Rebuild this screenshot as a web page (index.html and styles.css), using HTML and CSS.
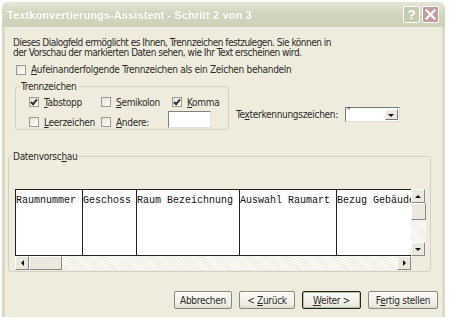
FILE: index.html
```html
<!DOCTYPE html>
<html>
<head>
    <title>Textkonvertierungs-Assistent</title>
    <link rel="stylesheet" href="styles.css">
</head>
<body>
<div class="window">
    <div class="titlebar">
        <span class="title">Textkonvertierungs-Assistent - Schritt 2 von 3</span>
        <div class="tb-buttons">
            <span class="tb-btn help">?</span>
            <span class="tb-btn close">
                <svg width="11" height="11" viewBox="0 0 11 11"><path d="M1.5 1.5 L9.5 9.5 M9.5 1.5 L1.5 9.5" stroke="#fff" stroke-width="2.2" stroke-linecap="square"/></svg>
            </span>
        </div>
    </div>

    <div class="content">
        <p class="intro">Dieses Dialogfeld ermöglicht es Ihnen, Trennzeichen festzulegen. Sie können in<br>der Vorschau der markierten Daten sehen, wie Ihr Text erscheinen wird.</p>

        <div class="check top-check"><span class="box"></span><span><u>A</u>ufeinanderfolgende Trennzeichen als ein Zeichen behandeln</span></div>

        <div class="sep-row">
            <div class="group seps">
                <span class="legend">Trennzeichen</span>
                <div class="sep-grid">
                    <div class="check"><span class="box checked"></span><span><u>T</u>abstopp</span></div>
                    <div class="check"><span class="box"></span><span><u>S</u>emikolon</span></div>
                    <div class="check"><span class="box checked"></span><span><u>K</u>omma</span></div>
                    <div class="check"><span class="box"></span><span><u>L</u>eerzeichen</span></div>
                    <div class="check"><span class="box"></span><span><u>A</u>ndere:</span></div>
                    <div class="textfield"></div>
                </div>
            </div>
            <div class="quote">
                <span>Te<u>x</u>terkennungszeichen:</span>
                <div class="combo"><span class="combo-val">"</span><span class="drop"></span></div>
            </div>
        </div>

        <div class="group preview-group">
            <span class="legend">Datenvorsc<u>h</u>au</span>
            <div class="preview">
                <div class="cells">
                    <div class="col c1">Raumnummer</div>
                    <div class="col c2">Geschoss</div>
                    <div class="col c3">Raum Bezeichnung</div>
                    <div class="col c4">Auswahl Raumart</div>
                    <div class="col c5">Bezug Gebäude</div>
                </div>
                <div class="vscroll">
                    <span class="sbtn up"></span>
                    <span class="thumb-v"></span>
                    <span class="track"></span>
                    <span class="sbtn down"></span>
                </div>
                <div class="hscroll">
                    <span class="sbtn left"></span>
                    <span class="thumb-h"></span>
                    <span class="track"></span>
                    <span class="sbtn right"></span>
                </div>
                <div class="corner"></div>
            </div>
        </div>

        <div class="buttons">
            <span class="btn b-cancel"><span>Abbrechen</span></span>
            <span class="btn b-back"><span>&lt; <u>Z</u>urück</span></span>
            <span class="btn b-next default"><span><u>W</u>eiter &gt;</span></span>
            <span class="btn b-finish"><span>F<u>e</u>rtig stellen</span></span>
        </div>
    </div>
</div>
</body>
</html>
```

FILE: styles.css
```css
body {
    margin: 0;
    background: #fff;
    font-family: "DejaVu Sans Condensed", "DejaVu Sans", sans-serif;
    font-size: 10px;
    letter-spacing: -0.3px;
    color: #2a2a2a;
}

.window {
    margin: 2px 0 0 2px;
    width: 443px;
    height: 315px;
    background: #d9dac8;
    border-radius: 6px 6px 0 0;
    display: flex;
    flex-direction: column;
}

.titlebar {
    height: 25px;
    display: flex;
    align-items: center;
    justify-content: space-between;
    padding: 0 6px 0 5px;
    border-radius: 6px 6px 0 0;
    background: linear-gradient(#e6e7d8, #d4d7c0 40%, #cdd1b8);
}
.title {
    color: #fff;
    font-family: "Liberation Sans", sans-serif;
    font-weight: bold;
    font-size: 11px;
    letter-spacing: 0.1px;
    text-shadow: 0 0 1px #b9bca2;
}
.tb-buttons {
    display: flex;
    gap: 2px;
}
.tb-btn {
    width: 15px;
    height: 15px;
    border: 1px solid #fff;
    border-radius: 2px;
    display: flex;
    align-items: center;
    justify-content: center;
    color: #fff;
    font-family: "Liberation Sans", sans-serif;
    font-weight: bold;
    font-size: 13px;
}
.help {
    background: #c5cbad;
}
.close {
    background: #c49c9f;
}

.content {
    flex: 1;
    margin: 0 3px 0 3px;
    background: #efecdd;
    padding: 11px 0 0 0;
}

.intro {
    margin: 0 0 0 8px;
    line-height: 10px;
    letter-spacing: -0.5px;
}

.check {
    display: flex;
    align-items: center;
    gap: 5px;
    white-space: nowrap;
}
.box {
    width: 8px;
    height: 8px;
    border: 1px solid #9a9a90;
    background: linear-gradient(135deg, #e4e2d6, #fff);
    position: relative;
}
.box.checked::after {
    content: "";
    position: absolute;
    left: 2px;
    top: 0px;
    width: 2px;
    height: 5px;
    border: solid #333;
    border-width: 0 2px 2px 0;
    transform: rotate(40deg);
}
.top-check {
    margin: 6px 0 0 11px;
}

.sep-row {
    display: flex;
    margin-top: 11px;
}
.group {
    border: 1px solid #d3d1c2;
    border-radius: 3px;
    position: relative;
}
.legend {
    position: absolute;
    top: -6px;
    left: 4px;
    padding: 0 1px;
    background: #efecdd;
    line-height: 11px;
}
.seps {
    margin-left: 10px;
    width: 212px;
    height: 42px;
}
.sep-grid {
    display: grid;
    grid-template-columns: 72px 71px 60px;
    grid-template-rows: 12px 12px;
    row-gap: 8px;
    padding: 9px 0 0 13px;
}
.textfield {
    width: 41px;
    height: 15px;
    border: 1px solid #808080;
    border-right-color: #e0e0e0;
    border-bottom-color: #e0e0e0;
    background: #fff;
    margin: -5px 0 0 -4px;
}

.quote {
    display: flex;
    align-items: center;
    align-self: flex-start;
    margin: 21px 0 0 7px;
    gap: 7px;
}
.combo {
    width: 53px;
    height: 13px;
    border: 1px solid #777;
    border-right-color: #ddd;
    border-bottom-color: #ddd;
    background: #fff;
    display: flex;
    justify-content: space-between;
}
.combo-val {
    font-size: 8px;
    line-height: 8px;
    padding-left: 1px;
}
.drop {
    width: 13px;
    height: 11px;
    margin: 1px;
    background: #ebe9dd;
    border: 1px solid;
    border-color: #fff #777 #777 #fff;
    box-sizing: border-box;
    position: relative;
}
.drop::after, .sbtn::after {
    content: "";
    position: absolute;
    left: 50%;
    top: 50%;
    border: 3px solid transparent;
}
.drop::after {
    border-top: 3px solid #111;
    margin: -1px 0 0 -3px;
}

.preview-group {
    margin: 26px 11px 0 3px;
    height: 114px;
}
.preview-group .legend {
    left: 3px;
}
.preview {
    margin: 32px 0 0 6px;
    width: 411px;
    height: 81px;
    display: grid;
    grid-template-columns: 396px 15px;
    grid-template-rows: 67px 14px;
}
.cells {
    background: #fff;
    display: flex;
    font-family: "Liberation Mono", monospace;
    font-size: 10px;
    letter-spacing: 0;
    color: #111;
    overflow: hidden;
    border-top: 1px solid #222;
    border-left: 1px solid #222;
    border-bottom: 1px solid #222;
}
.col {
    padding: 5px 0 0 0;
    white-space: nowrap;
    border-right: 1px solid #222;
    flex: none;
}
.c1 { width: 66px; }
.c2 { width: 53px; }
.c3 { width: 102px; }
.c4 { width: 96px; }
.c5 { width: 90px; border-right: none; }

.vscroll, .hscroll {
    display: flex;
    background: #f4f3ee;
}
.vscroll {
    flex-direction: column;
}
.sbtn {
    width: 14px;
    height: 14px;
    flex: none;
    background: #ebe9dd;
    border: 1px solid;
    border-color: #fff #888 #888 #fff;
    box-sizing: border-box;
    position: relative;
}
.up::after {
    border-bottom: 3px solid #111;
    margin: -4px 0 0 -3px;
}
.down::after {
    border-top: 3px solid #111;
    margin: -1px 0 0 -3px;
}
.left::after {
    border-right: 3px solid #111;
    margin: -3px 0 0 -4px;
}
.right::after {
    border-left: 3px solid #111;
    margin: -3px 0 0 -1px;
}
.thumb-v {
    height: 15px;
    background: #ebe9dd;
    border: 1px solid;
    border-color: #fff #888 #888 #fff;
}
.thumb-h {
    width: 33px;
    height: 14px;
    box-sizing: border-box;
    background: #ebe9dd;
    border: 1px solid;
    border-color: #fff #888 #888 #fff;
}
.track {
    flex: 1;
    background: repeating-linear-gradient(45deg, #f1efe6 0 1px, #fbfaf6 1px 2px);
}
.corner {
    background: #efecdd;
}

.buttons {
    display: flex;
    justify-content: flex-end;
    gap: 7px;
    margin: 19px 4px 0 0;
}
.btn {
    height: 18px;
    box-sizing: border-box;
    border: 1px solid #8a897f;
    border-radius: 2px;
    background: linear-gradient(#fbfbf8, #eeece3 80%, #dcdace);
    display: flex;
    align-items: center;
    justify-content: center;
}
.b-cancel { width: 58px; }
.b-back { width: 56px; }
.b-next { width: 59px; }
.b-finish { width: 70px; }
.btn.default {
    border: 1px solid #222;
    box-shadow: inset 0 0 0 1px #b8c4a0;
}
```
